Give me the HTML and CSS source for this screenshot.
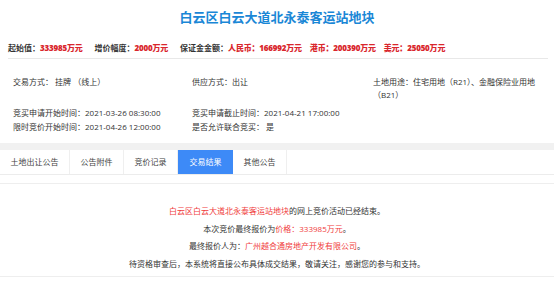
FILE: index.html
```html
<!DOCTYPE html>
<html lang="zh-CN">
<head>
    <meta charset="UTF-8">
    <title>白云区白云大道北永泰客运站地块</title>
    <link rel="stylesheet" href="styles.css">
</head>
<body>

    <h1 class="titulo">白云区白云大道北永泰客运站地块</h1>

    <div class="precios">
        <span class="item">起始值：<b>333985万元</b></span>
        <span class="item">增价幅度：<b>2000万元</b></span>
        <span class="item">保证金金额：<b>人民币：166992万元</b></span>
        <span class="item"><b>港币：200390万元</b></span>
        <span class="item"><b>美元：25050万元</b></span>
    </div>

    <div class="info">
        <div>交易方式： 挂牌 （线上）</div>
        <div>供应方式：出让</div>
        <div>土地用途：住宅用地（R21）、金融保险业用地（B21）</div>
        <div>竞买申请开始时间：2021-03-26 08:30:00</div>
        <div>竞买申请截止时间：2021-04-21 17:00:00</div>
        <div></div>
        <div>限时竞价开始时间：2021-04-26 12:00:00</div>
        <div>是否允许联合竞买： 是</div>
        <div></div>
    </div>

    <div class="franja"></div>
    <ul class="tabs">
        <li class="tab1">土地出让公告</li>
        <li>公告附件</li>
        <li>竞价记录</li>
        <li class="activa">交易结果</li>
        <li>其他公告</li>
    </ul>

    <div class="resultado">
        <p><span class="rojo">白云区白云大道北永泰客运站地块</span>的网上竞价活动已经结束。</p>
        <p>本次竞价最终报价为<span class="rojo">价格：333985万元</span>。</p>
        <p>最终报价人为：<span class="rojo">广州越合通房地产开发有限公司</span>。</p>
        <p>待资格审查后，本系统将直接公布具体成交结果，敬请关注，感谢您的参与和支持。</p>
    </div>

</body>
</html>
```

FILE: styles.css
```css
body {
    font-family: "Open Sans", "Noto Sans CJK SC", sans-serif;
    margin: 0;
    padding: 0;
    color: #333;
    background: #fff;
}

.titulo {
    margin: 0;
    padding-top: 10px;
    text-align: center;
    font-size: 13px;
    line-height: 14px;
    color: #1a87d6;
    font-weight: 700;
}

.precios {
    margin: 0 6px 0 8px;
    padding: 18px 0 4px 0;
    border-bottom: 1px solid #e8e8e8;
    font-size: 8px;
    line-height: 12px;
    font-weight: 700;
    color: #333;
    display: flex;
}

.precios .item {
    margin-right: 12px;
    white-space: nowrap;
}

.precios .item:nth-child(3),
.precios .item:nth-child(4) {
    margin-right: 8px;
}

.precios b {
    color: #d9262c;
    letter-spacing: -0.2px;
}

.info {
    display: grid;
    grid-template-columns: 179px 181px 165px;
    row-gap: 1px;
    padding: 16px 0 0 13px;
    font-size: 8px;
    line-height: 13px;
    color: #333;
}

.info div:nth-child(4),
.info div:nth-child(5) {
    margin-top: 4px;
}

.franja {
    height: 7px;
    margin-top: 10px;
    background: #f1f1f1;
}

.tabs {
    list-style: none;
    display: flex;
    margin: 0;
    padding: 0;
    height: 24px;
    border-bottom: 1px solid #ececec;
}

.tabs li {
    width: 53px;
    border-right: 1px solid #efefef;
    text-align: center;
    font-size: 8px;
    line-height: 24px;
    color: #444;
}

.tabs li.tab1 {
    width: 69px;
}

.tabs li.activa {
    background: #3d8af7;
    color: #fff;
    width: 55px;
    border-right: 0;
}

.resultado {
    margin-top: 8px;
    border-top: 1px solid #eeeeee;
    border-bottom: 1px solid #eeeeee;
    padding: 18px 0 3px 0;
    text-align: center;
    font-size: 8px;
    line-height: 17.7px;
    color: #333;
}

.resultado p {
    margin: 0;
}

.rojo {
    color: #f03c3c;
}
```
